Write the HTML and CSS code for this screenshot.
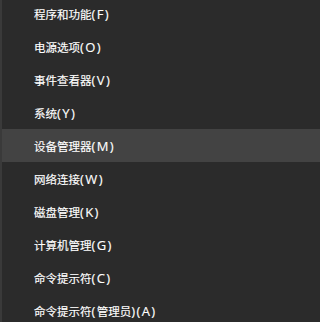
FILE: index.html
```html
<!DOCTYPE html>
<html lang="zh-CN">
<head>
<meta charset="utf-8">
<title>Win+X 菜单</title>
<link rel="stylesheet" href="styles.css">
</head>
<body>
<ul class="menu">
  <li class="item">程序和功能<span class="key">(F)</span></li>
  <li class="item">电源选项<span class="key">(O)</span></li>
  <li class="item">事件查看器<span class="key">(V)</span></li>
  <li class="item">系统<span class="key">(Y)</span></li>
  <li class="item is-active">设备管理器<span class="key">(M)</span></li>
  <li class="item">网络连接<span class="key">(W)</span></li>
  <li class="item">磁盘管理<span class="key">(K)</span></li>
  <li class="item">计算机管理<span class="key">(G)</span></li>
  <li class="item">命令提示符<span class="key">(C)</span></li>
  <li class="item">命令提示符<span class="key">(</span>管理员<span class="key">)(A)</span></li>
</ul>
</body>
</html>
```
FILE: styles.css
```css
html, body {
  margin: 0;
  padding: 0;
  height: 100%;
  background: #2b2b2b;
  overflow: hidden;
}
body {
  border-left: 2px solid #3a3a3a;
  font-family: "Open Sans", "Noto Sans CJK SC", "Microsoft YaHei", sans-serif;
  font-size: 11.5px;
  color: #ffffff;
  -webkit-text-stroke: 0.15px #ffffff;
}
.menu {
  list-style: none;
  margin: -3px 0 0 0;
  padding: 0;
}
.item {
  height: 33px;
  line-height: 35px;
  padding-left: 32px;
  white-space: nowrap;
}
.key {
  font-size: 13px;
  letter-spacing: 1.4px;
}
.item.is-active {
  background: #434343;
}
```
